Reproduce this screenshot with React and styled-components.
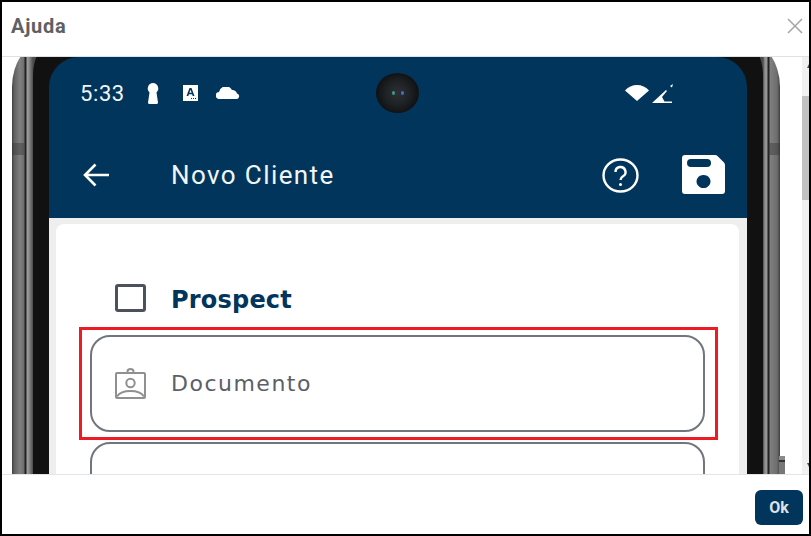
import styled, { createGlobalStyle } from "styled-components";

const NAVY = "#01355b";

const App = () => {
  return (
    <>
      <GlobalStyle />
      <Dialog>
        <Header>
          <Title>Ajuda</Title>
          <CloseIcon viewBox="0 0 16 16">
            <path d="M1 1l14 14M15 1L1 15" />
          </CloseIcon>
        </Header>
        <Body>
          <Viewport>
            <Phone>
              <SideKey />
              <SideKey $right />
              <Bezel>
                <Screen>
                  <StatusBar>
                    <Clock>5:33</Clock>
                    <Keyhole viewBox="0 0 14 21">
                      <path d="M7 0a5.500 5.500 0 0 1 3.500 9.500l1.500 10q0 1.500-1.500 1.500h-7Q2 21 2 19.500l1.500-10A5.500 5.500 0 0 1 7 0z" />
                    </Keyhole>
                    <AppBadge viewBox="0 0 15 16">
                      <path fillRule="evenodd" d="M0 0h15v16H0zM6.500 3L3.500 11h1.800l.6-1.800h3.200l.6 1.800h1.800L8.500 3zM6.400 7.800L7.500 4.800l1.100 3zM8 13h1v1H8zM10 13h1v1h-1zM12 13h1v1h-1z" />
                    </AppBadge>
                    <CloudIcon viewBox="0 0 24 12">
                      <path d="M3.500 12a3.500 3.500 0 0 1-.5-7 7 7 0 0 1 13-2 5 5 0 0 1 5 3.500 2.800 2.800 0 0 1-1 5.500z" />
                    </CloudIcon>
                    <StatusRight>
                      <WifiIcon viewBox="0 0 24 16">
                        <path d="M0 5.500Q5 0 12 0t12 5.500L12 16z" />
                      </WifiIcon>
                      <SignalIcon viewBox="0 0 22 19">
                        <path d="M0 19L14 6l1 1-5 6 2.500 4.500H20V19z" />
                        <path d="M18 2l3-2-1 3.500z" />
                      </SignalIcon>
                    </StatusRight>
                    <Camera>
                      <Lens $color="#3a9a94" />
                      <Lens $color="#4a6fc4" />
                    </Camera>
                  </StatusBar>
                  <Toolbar>
                    <BackIcon viewBox="0 0 27 24">
                      <path d="M26 12H2M12.500 1.500L2 12l10.500 10.500" />
                    </BackIcon>
                    <ToolbarTitle>Novo Cliente</ToolbarTitle>
                    <HelpIcon viewBox="0 0 37 35">
                      <ellipse cx="18.500" cy="17.500" rx="17" ry="16" />
                      <path d="M13.500 14a5 5 0 1 1 7.500 4.300c-1.700 1-2.500 1.800-2.500 3.700" />
                      <circle className="dot" cx="18.500" cy="26.500" r="1.500" />
                    </HelpIcon>
                    <SaveIcon viewBox="0 0 43 39">
                      <path
                        fillRule="evenodd"
                        d="M3 0h30q1.500 0 2.500 1L42 7.500q1 1 1 2.500v26q0 3-3 3H3q-3 0-3-3V3q0-3 3-3zM9 4q-4 0-4 4t4 4h16q4 0 4-4t-4-4zM21.500 20a7 6.500 0 1 0 .01 0z"
                      />
                    </SaveIcon>
                  </Toolbar>
                  <Content>
                    <Card>
                      <CheckRow>
                        <CheckBox />
                        <CheckLabel>Prospect</CheckLabel>
                      </CheckRow>
                      <Field>
                        <BadgeIcon viewBox="0 0 31 31">
                          <rect x="1" y="5" width="29" height="25" rx="1" />
                          <path d="M12.500 5V3.500a3 2.500 0 0 1 6 0V5" />
                          <circle cx="15.500" cy="15" r="4.200" />
                          <path d="M2 28.500c3-4.500 8-5.500 13.500-5.500s10.500 1 13.500 5.500" />
                        </BadgeIcon>
                        <FieldLabel>Documento</FieldLabel>
                        <Highlight />
                      </Field>
                      <Field />
                    </Card>
                  </Content>
                </Screen>
              </Bezel>
            </Phone>
            <PowerKey />
          </Viewport>
          <Scrollbar>
            <ArrowUp />
            <Thumb />
            <ArrowDown />
          </Scrollbar>
        </Body>
        <Footer>
          <OkButton>Ok</OkButton>
        </Footer>
      </Dialog>
    </>
  );
};

export default App;

/*
Styles
*/

const GlobalStyle = createGlobalStyle`
  html, body {
    margin: 0;
    padding: 0;
    background: #000;
  }
`;

const Dialog = styled.div`
  box-sizing: border-box;
  width: 811px;
  height: 536px;
  border: 2px solid #000;
  background: #fff;
  display: flex;
  flex-direction: column;
  overflow: hidden;
`;

const Header = styled.div`
  box-sizing: border-box;
  height: 55px;
  flex: none;
  display: flex;
  align-items: center;
  justify-content: space-between;
  padding: 0 6px 6px 9px;
  border-bottom: 1px solid #dee2e6;
`;

const Title = styled.span`
  font-family: "Roboto", "Liberation Sans", sans-serif;
  font-size: 20px;
  font-weight: 700;
  letter-spacing: 0.7px;
  color: #5e6064;
`;

const CloseIcon = styled.svg`
  width: 16px;
  height: 16px;
  fill: none;
  stroke: #a3a5a8;
  stroke-width: 1.5;
`;

const Body = styled.div`
  flex: 1;
  min-height: 0;
  display: flex;
`;

const Viewport = styled.div`
  position: relative;
  flex: 1;
  min-width: 0;
  padding-left: 10px;
  overflow: hidden;
`;

const Phone = styled.div`
  position: relative;
  box-sizing: border-box;
  width: 768px;
  height: 560px;
  margin-top: -16px;
  padding: 0 17px 0 21px;
  border-radius: 34px 34px 0 0 / 46px 46px 0 0;
  overflow: hidden;
  background: linear-gradient(
    90deg,
    #3f3f3f 0,
    #5f5f5f 2px,
    #808080 8px,
    #6e6e6e 12px,
    #222 13px,
    #222 14px,
    #a0a0a0 15px,
    #8c8c8c 17px,
    #4c4c4c 21px,
    #4c4c4c calc(100% - 17px),
    #939393 calc(100% - 15px),
    #939393 calc(100% - 13px),
    #222 calc(100% - 12px),
    #222 calc(100% - 11px),
    #808080 calc(100% - 10px),
    #6e6e6e calc(100% - 3px),
    #3f3f3f 100%
  );
`;

const SideKey = styled.div`
  position: absolute;
  top: 102px;
  ${(props) => (props.$right ? "right: 0;" : "left: 0;")}
  width: 12px;
  height: 12px;
  background: rgba(50, 50, 50, 0.4);
`;

const PowerKey = styled.div`
  position: absolute;
  left: 777px;
  top: 399px;
  width: 6px;
  height: 20px;
  background: linear-gradient(180deg, #8a8a8a 0, #8a8a8a 4px, #333 4px, #333 6px, #777 6px);
`;

const Bezel = styled.div`
  box-sizing: border-box;
  height: 100%;
  padding: 16px 16px 0;
  background: #111;
  border-radius: 22px 22px 0 0 / 34px 34px 0 0;
`;

const Screen = styled.div`
  height: 100%;
  display: flex;
  flex-direction: column;
  background: ${NAVY};
  border-radius: 30px 30px 0 0;
  overflow: hidden;
`;

const StatusBar = styled.div`
  position: relative;
  box-sizing: border-box;
  height: 72px;
  flex: none;
  display: flex;
  align-items: center;
  padding: 0 73px 0 31px;
  fill: #fff;
`;

const Clock = styled.span`
  width: 45px;
  margin-right: 21px;
  font-family: "Roboto", sans-serif;
  font-size: 22px;
  letter-spacing: 0.6px;
  color: #f2f5f7;
`;

const Keyhole = styled.svg`
  width: 14px;
  height: 21px;
  margin-right: 23px;
`;

const AppBadge = styled.svg`
  width: 15px;
  height: 16px;
  margin-right: 18px;
`;

const CloudIcon = styled.svg`
  width: 24px;
  height: 12px;
`;

const StatusRight = styled.div`
  margin-left: auto;
  display: flex;
  align-items: center;
  gap: 3px;
`;

const WifiIcon = styled.svg`
  width: 24px;
  height: 16px;
`;

const SignalIcon = styled.svg`
  width: 22px;
  height: 19px;
`;

const Camera = styled.div`
  position: absolute;
  left: 327px;
  top: 16px;
  width: 43px;
  height: 40px;
  border-radius: 50%;
  display: flex;
  align-items: center;
  justify-content: center;
  gap: 6px;
  background: radial-gradient(circle, #2c3034 0, #1f2225 40%, #111316 68%, #07090c 100%);
`;

const Lens = styled.span`
  width: 3px;
  height: 4px;
  border-radius: 50%;
  background: ${(props) => props.$color};
`;

const Toolbar = styled.div`
  box-sizing: border-box;
  height: 89px;
  flex: none;
  display: flex;
  align-items: center;
  padding: 3px 22px 0 34px;
`;

const BackIcon = styled.svg`
  width: 27px;
  height: 24px;
  margin-right: 61px;
  fill: none;
  stroke: #fff;
  stroke-width: 2.6;
`;

const ToolbarTitle = styled.span`
  font-family: "Roboto", sans-serif;
  font-size: 26px;
  letter-spacing: 1.4px;
  color: #f2f5f7;
`;

const HelpIcon = styled.svg`
  width: 37px;
  height: 35px;
  margin-left: auto;
  margin-right: 43px;
  fill: none;
  stroke: #fff;
  stroke-width: 2.4;

  .dot {
    fill: #fff;
    stroke: none;
  }
`;

const SaveIcon = styled.svg`
  width: 43px;
  height: 39px;
  margin-top: -1px;
  fill: #fff;
`;

const Content = styled.div`
  flex: 1;
  padding: 6px 8px 0 7px;
  background: #eeeeee;
`;

const Card = styled.div`
  box-sizing: border-box;
  height: 100%;
  padding: 60px 34px 0;
  background: #fff;
  border-radius: 8px 8px 0 0;
`;

const CheckRow = styled.div`
  height: 28px;
  display: flex;
  align-items: center;
  padding-left: 25px;
  margin-bottom: 23px;
`;

const CheckBox = styled.div`
  box-sizing: border-box;
  width: 31px;
  height: 28px;
  margin-right: 25px;
  border: 3px solid #4b525c;
  border-radius: 3px;
`;

const CheckLabel = styled.span`
  padding-top: 3px;
  font-family: "DejaVu Sans", sans-serif;
  font-size: 24px;
  font-weight: 700;
  letter-spacing: 0.2px;
  line-height: 30px;
  color: ${NAVY};
`;

const Field = styled.div`
  position: relative;
  box-sizing: border-box;
  height: 97px;
  margin-bottom: 10px;
  display: flex;
  align-items: center;
  padding-left: 23px;
  border: 2px solid #71767e;
  border-radius: 20px;
`;

const BadgeIcon = styled.svg`
  width: 31px;
  height: 31px;
  margin-right: 25px;
  fill: none;
  stroke: #909090;
  stroke-width: 2;
`;

const FieldLabel = styled.span`
  font-family: "DejaVu Sans", sans-serif;
  font-size: 22px;
  letter-spacing: 1.5px;
  color: #5c6066;
`;

const Highlight = styled.div`
  position: absolute;
  top: -10px;
  bottom: -10px;
  left: -13px;
  right: -15px;
  border: 3px solid #ed1c24;
`;

const Scrollbar = styled.div`
  width: 7px;
  flex: none;
  display: flex;
  flex-direction: column;
  background: #f1f1f1;
`;

const ArrowUp = styled.div`
  align-self: flex-end;
  margin-top: 7px;
  border-bottom: 4px solid #505050;
  border-left: 2px solid transparent;
`;

const Thumb = styled.div`
  height: 104px;
  margin-top: 28px;
  background: #c1c1c1;
`;

const ArrowDown = styled.div`
  align-self: flex-end;
  margin-top: auto;
  margin-bottom: 7px;
  border-top: 4px solid #505050;
  border-left: 2px solid transparent;
`;

const Footer = styled.div`
  box-sizing: border-box;
  height: 60px;
  flex: none;
  display: flex;
  align-items: flex-start;
  justify-content: flex-end;
  padding: 15px 6px 0 0;
  border-top: 1px solid #e3e3ea;
`;

const OkButton = styled.button`
  width: 48px;
  height: 35px;
  padding: 0;
  border: none;
  border-radius: 6px;
  background: ${NAVY};
  color: #dfe3e6;
  font-family: "Roboto", "Liberation Sans", sans-serif;
  font-size: 16px;
  font-weight: 700;
`;
